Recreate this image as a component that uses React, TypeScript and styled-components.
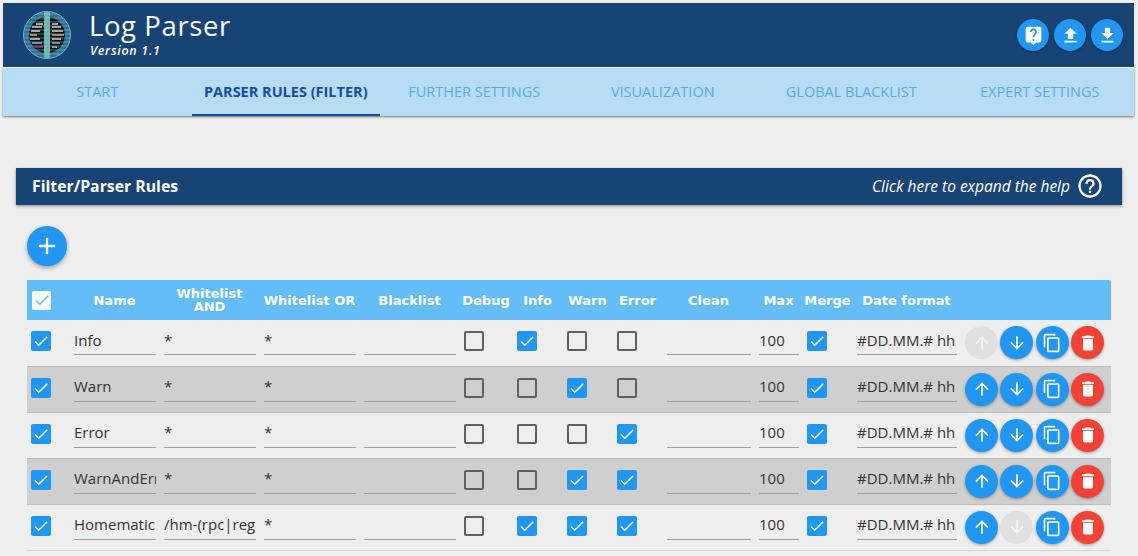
import React from 'react';
import styled, { createGlobalStyle } from 'styled-components';
import {
  MdAdd,
  MdArrowDownward,
  MdArrowUpward,
  MdCheck,
  MdContentCopy,
  MdDelete,
  MdFileDownload,
  MdFileUpload,
  MdHelpOutline,
  MdLiveHelp,
} from 'react-icons/md';

const TABS = [
  'Start',
  'Parser Rules (Filter)',
  'Further Settings',
  'Visualization',
  'Global Blacklist',
  'Expert Settings',
];

const COLUMNS = [
  { label: '', width: 43 },
  { label: 'Name', width: 90 },
  { label: 'Whitelist AND', width: 100 },
  { label: 'Whitelist OR', width: 100 },
  { label: 'Blacklist', width: 100 },
  { label: 'Debug', width: 53 },
  { label: 'Info', width: 50 },
  { label: 'Warn', width: 50 },
  { label: 'Error', width: 50 },
  { label: 'Clean', width: 92 },
  { label: 'Max', width: 48 },
  { label: 'Merge', width: 50 },
  { label: 'Date format', width: 108 },
  { label: '', width: 150 },
];

const RULES = [
  { name: 'Info', and: '*', debug: false, info: true, warn: false, error: false, upOff: true, downOff: false },
  { name: 'Warn', and: '*', debug: false, info: false, warn: true, error: false, upOff: false, downOff: false },
  { name: 'Error', and: '*', debug: false, info: false, warn: false, error: true, upOff: false, downOff: false },
  { name: 'WarnAndError', and: '*', debug: false, info: false, warn: true, error: true, upOff: false, downOff: false },
  { name: 'Homematic', and: '/hm-(rpc|rega)', debug: false, info: true, warn: true, error: true, upOff: false, downOff: true },
];

const Check = ({ on }: { on: boolean }) => (
  <CheckBox $on={on}>{on && <MdCheck size={18} />}</CheckBox>
);

const Logo = () => (
  <svg width="48" height="48" viewBox="0 0 48 48">
    <defs>
      <clipPath id="globe">
        <circle cx="24" cy="24" r="23.5" />
      </clipPath>
    </defs>
    <circle cx="24" cy="24" r="23.5" fill="#2f7192" stroke="#78aec6" />
    <ellipse cx="24" cy="24" rx="18" ry="18" fill="#0c1216" />
    <g strokeWidth="1.3">
      <path d="M13 13h7M9 16h10M8 20h9M7 28h10M29 13h6M29 16h9M29 20h11M29 28h9" stroke="#cfd8cc" />
      <path d="M7 24h7M29 24h12" stroke="#e0b34c" />
      <path d="M9 32h10M29 32h8" stroke="#8fb3c4" />
      <path d="M11 36h9" stroke="#c42c90" />
      <path d="M29 36h5" stroke="#cfd8cc" />
    </g>
    <rect x="21" y="1" width="6" height="46" fill="#6bb5ab" />
    <g clipPath="url(#globe)" stroke="#9fd0e2" strokeWidth="0.8" opacity="0.6">
      <path d="M0 3h48M0 7h48M0 11h48M0 15h48M0 19h48M0 23h48M0 27h48M0 31h48M0 35h48M0 39h48M0 43h48" />
    </g>
  </svg>
);

export default function App() {
  return (
    <Page>
      <GlobalStyle />
      <AppBar>
        <Brand>
          <LogoSlot>
            <Logo />
          </LogoSlot>
          <div>
            <Title>Log Parser</Title>
            <Version>Version 1.1</Version>
          </div>
        </Brand>
        <HeaderActions>
          <RoundButton><MdLiveHelp size={21} /></RoundButton>
          <RoundButton><MdFileUpload size={21} /></RoundButton>
          <RoundButton><MdFileDownload size={21} /></RoundButton>
        </HeaderActions>
      </AppBar>
      <TabBar>
        {TABS.map((tab, i) => (
          <Tab key={tab} $active={i === 1}>{tab}</Tab>
        ))}
      </TabBar>

      <HelpBar>
        <HelpTitle>Filter/Parser Rules</HelpTitle>
        <HelpHint>
          Click here to expand the help
          <MdHelpOutline size={28} />
        </HelpHint>
      </HelpBar>

      <Content>
        <AddButton><MdAdd size={28} /></AddButton>
        <RulesTable>
          <colgroup>
            {COLUMNS.map((col, i) => (
              <col key={i} style={{ width: col.width }} />
            ))}
          </colgroup>
          <thead>
            <tr>
              {COLUMNS.map((col, i) => (
                <HeadCell key={i}>{i === 0 ? <HeadCheck><MdCheck size={18} /></HeadCheck> : col.label}</HeadCell>
              ))}
            </tr>
          </thead>
          <tbody>
            {RULES.map((rule) => (
              <Row key={rule.name}>
                <Cell><Check on /></Cell>
                <Cell><Field defaultValue={rule.name} /></Cell>
                <Cell><Field defaultValue={rule.and} /></Cell>
                <Cell><Field defaultValue="*" /></Cell>
                <Cell><Field defaultValue="" /></Cell>
                <Cell><Check on={rule.debug} /></Cell>
                <Cell><Check on={rule.info} /></Cell>
                <Cell><Check on={rule.warn} /></Cell>
                <Cell><Check on={rule.error} /></Cell>
                <Cell><Field defaultValue="" /></Cell>
                <Cell><Field defaultValue="100" /></Cell>
                <Cell><Check on /></Cell>
                <Cell><Field defaultValue="#DD.MM.# hh" /></Cell>
                <ActionCell>
                  <RowActions>
                    <MiniButton $off={rule.upOff}><MdArrowUpward size={20} /></MiniButton>
                    <MiniButton $off={rule.downOff}><MdArrowDownward size={20} /></MiniButton>
                    <MiniButton><MdContentCopy size={20} /></MiniButton>
                    <MiniButton $danger><MdDelete size={20} /></MiniButton>
                  </RowActions>
                </ActionCell>
              </Row>
            ))}
          </tbody>
        </RulesTable>
      </Content>
    </Page>
  );
}

const GlobalStyle = createGlobalStyle`
  html, body {
    margin: 0;
    height: 100%;
    overflow: hidden;
    background: #eeeeee;
  }
`;

const Page = styled.div`
  box-sizing: border-box;
  padding: 3px 4px 0 3px;
  font-family: 'Open Sans', sans-serif;
`;

const AppBar = styled.header`
  height: 64px;
  background: #174475;
  display: flex;
  align-items: center;
  justify-content: space-between;
  color: #fff;
`;

const Brand = styled.div`
  display: flex;
  align-items: center;
`;

const LogoSlot = styled.div`
  display: flex;
  margin: 0 19px 0 20px;
`;

const Title = styled.div`
  font-size: 27.5px;
  line-height: 32px;
  margin: -2px 0 0 -1px;
  letter-spacing: 0.6px;
`;

const Version = styled.div`
  font-size: 12.5px;
  line-height: 15px;
  margin-top: 1px;
  font-weight: 600;
  font-style: italic;
  letter-spacing: 0.7px;
`;

const HeaderActions = styled.div`
  display: flex;
  gap: 5px;
  margin-right: 11px;
`;

const RoundButton = styled.button`
  width: 32px;
  height: 32px;
  padding: 0;
  border: 0;
  border-radius: 50%;
  background: #2196f3;
  color: #fff;
  display: flex;
  align-items: center;
  justify-content: center;
  box-shadow: 0 1px 3px rgba(0, 0, 0, 0.35);
`;

const TabBar = styled.nav`
  height: 49px;
  display: grid;
  grid-template-columns: repeat(6, 1fr);
  background: #b7dcf6;
  border-top: 1px solid #e3f1fb;
  box-sizing: border-box;
  box-shadow: 0 1px 2px rgba(0, 0, 0, 0.5);
`;

const Tab = styled.div<{ $active?: boolean }>`
  display: flex;
  align-items: center;
  justify-content: center;
  box-sizing: border-box;
  font-size: 14.5px;
  font-weight: ${(p) => (p.$active ? 700 : 400)};
  text-transform: uppercase;
  color: ${(p) => (p.$active ? '#174da0' : '#5aa9ea')};
  border-bottom: 2px solid ${(p) => (p.$active ? '#174da0' : 'transparent')};
`;

const HelpBar = styled.div`
  height: 37px;
  margin: 52px 12px 0 13px;
  padding: 0 18px 0 16px;
  background: #174475;
  color: #fff;
  display: flex;
  align-items: center;
  justify-content: space-between;
  box-shadow: 0 1px 3px rgba(0, 0, 0, 0.45);
`;

const HelpTitle = styled.div`
  font-weight: 700;
  font-size: 15.8px;
  margin-top: -1px;
`;

const HelpHint = styled.div`
  display: flex;
  align-items: center;
  gap: 6px;
  font-size: 15.5px;
  font-style: italic;
  line-height: 30px;
  margin-top: -2px;
`;

const Content = styled.div`
  padding: 21px 0 0 24px;
`;

const AddButton = styled.button`
  width: 40px;
  height: 40px;
  padding: 0;
  border: 0;
  border-radius: 50%;
  background: #2196f3;
  color: #fff;
  display: flex;
  align-items: center;
  justify-content: center;
  box-shadow: 0 2px 4px rgba(0, 0, 0, 0.35);
`;

const RulesTable = styled.table`
  margin-top: 14px;
  width: 1084px;
  table-layout: fixed;
  border-collapse: collapse;
`;

const HeadCell = styled.th`
  height: 40px;
  padding: 0 1px 0 0;
  background: #64bdf6;
  color: #fff;
  font-family: 'DejaVu Sans', sans-serif;
  font-size: 13px;
  font-weight: 700;
  line-height: 13px;
  text-align: center;
  vertical-align: middle;
  &:last-child {
    border-radius: 0 2px 0 0;
  }
`;

const HeadCheck = styled.span`
  width: 19px;
  height: 19px;
  margin: 0 0 0 5px;
  border-radius: 2px;
  background: #fff;
  color: #64bdf6;
  display: flex;
  align-items: center;
  justify-content: center;
`;

const Row = styled.tr`
  height: 46px;
  border-bottom: 1px solid #bcbcbc;
  &:nth-child(even) {
    background: #cfcfcf;
  }
  &:last-child {
    border-bottom-color: #d6d6d6;
  }
`;

const Cell = styled.td`
  padding: 5px 4px 0;
  vertical-align: top;
`;

const ActionCell = styled.td`
  padding: 6px 0 0 4px;
  vertical-align: top;
`;

const RowActions = styled.div`
  display: flex;
  gap: 2.4px;
`;

const CheckBox = styled.span<{ $on: boolean }>`
  box-sizing: border-box;
  width: 20px;
  height: 20px;
  margin-top: 6px;
  border-radius: 2px;
  border: ${(p) => (p.$on ? '0' : '2px solid #5f5f5f')};
  background: ${(p) => (p.$on ? '#2196f3' : 'transparent')};
  color: #fff;
  display: flex;
  align-items: center;
  justify-content: center;
`;

const Field = styled.input`
  box-sizing: border-box;
  display: block;
  width: 100%;
  height: 30px;
  padding: 0;
  border: 0;
  border-bottom: 1px solid #9e9e9e;
  background: transparent;
  outline: none;
  font-family: 'Open Sans', sans-serif;
  font-size: 15px;
  color: #333;
`;

const MiniButton = styled.button<{ $off?: boolean; $danger?: boolean }>`
  width: 33px;
  height: 33px;
  flex: none;
  padding: 0;
  border: 0;
  border-radius: 50%;
  background: ${(p) => (p.$danger ? '#f44336' : p.$off ? '#e0e0e0' : '#2196f3')};
  color: ${(p) => (p.$off ? '#f4f4f4' : '#fff')};
  display: flex;
  align-items: center;
  justify-content: center;
  box-shadow: ${(p) => (p.$off ? 'none' : '0 1px 3px rgba(0, 0, 0, 0.35)')};
`;
